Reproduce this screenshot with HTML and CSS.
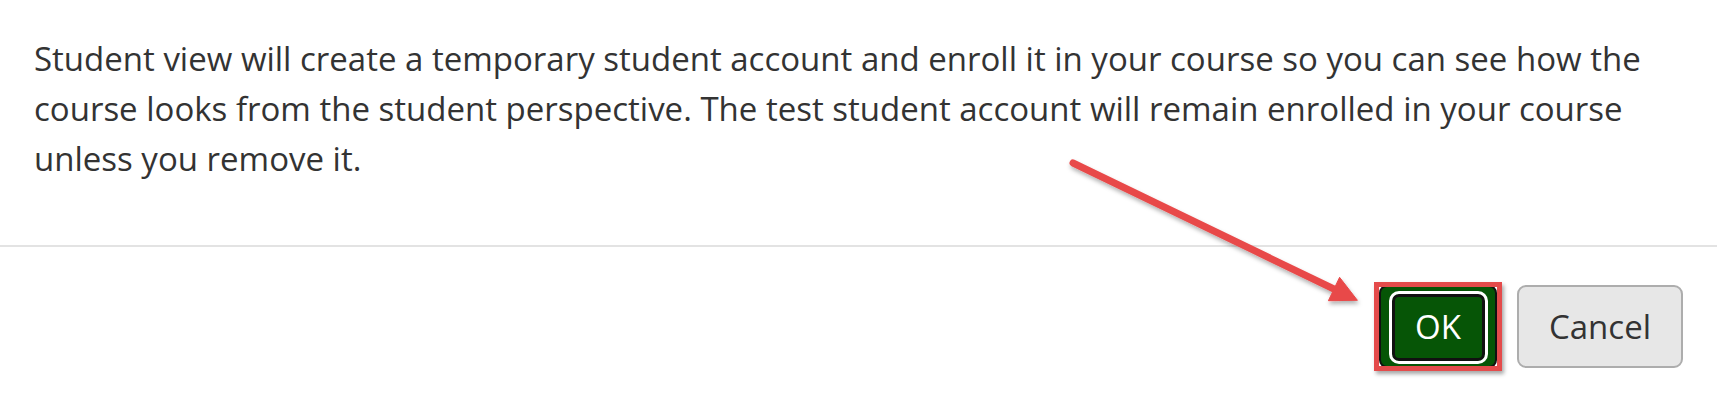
FILE: index.html
```html
<!DOCTYPE html>
<html lang="en">
<head>
<meta charset="utf-8">
<title>Student View</title>
<link rel="stylesheet" href="styles.css">
</head>
<body>
<div class="dialog">
  <div class="dialog-body">
    <p class="message">Student view will create a temporary student account and enroll it in your course so you can see how the course looks from the student perspective. The test student account will remain enrolled in your course unless you remove it.</p>
  </div>
  <div class="dialog-footer">
    <button class="btn btn-ok" type="button">OK<span class="highlight"></span></button>
    <button class="btn btn-cancel" type="button">Cancel</button>
  </div>
  <svg class="annotation" width="1717" height="404" viewBox="0 0 1717 404" aria-hidden="true">
    <defs>
      <filter id="shadow" x="-10%" y="-10%" width="130%" height="140%">
        <feDropShadow dx="1" dy="3" stdDeviation="2" flood-color="#000" flood-opacity="0.3"/>
      </filter>
    </defs>
    <g filter="url(#shadow)" fill="#e84a4a" stroke="#e84a4a">
      <line x1="1073" y1="163" x2="1336" y2="290" stroke-width="7" stroke-linecap="round"/>
      <polygon points="1328.4,300.7 1339.6,277.3 1357.4,300.3" stroke-width="1" stroke-linejoin="round"/>
    </g>
  </svg>
</div>
</body>
</html>
```
FILE: styles.css
```css
html, body {
  margin: 0;
  padding: 0;
  background: #ffffff;
}

body {
  font-family: "Open Sans", "Noto Sans", sans-serif;
  color: #333333;
}

.dialog {
  position: relative;
  width: 1717px;
  height: 404px;
  overflow: hidden;
  background: #ffffff;
}

.dialog-body {
  padding: 34px 33px 61px 34px;
  border-bottom: 2px solid #e3e3e3;
}

.message {
  margin: 0;
  font-size: 33px;
  line-height: 50px;
}

.dialog-footer {
  display: flex;
  justify-content: flex-end;
  align-items: flex-start;
  gap: 20px;
  padding: 38px 34px 0 0;
}

.btn {
  font-family: "Open Sans", "Noto Sans", sans-serif;
  font-size: 33px;
  line-height: 45px;
  height: 83px;
  margin: 0;
  box-sizing: border-box;
  cursor: pointer;
}

.btn-cancel {
  width: 166px;
  background: #e7e7e7;
  color: #333333;
  border: 2px solid #adadad;
  border-radius: 9px;
  padding: 0;
}

.btn-ok {
  position: relative;
  width: 118px;
  background: #065506;
  color: #ffffff;
  border: 2px solid #111111;
  border-radius: 8px;
  padding: 0;
}

.btn-ok::before {
  content: "";
  position: absolute;
  top: 4px;
  bottom: 2px;
  left: 8px;
  right: 7px;
  border: 3px solid #ffffff;
  border-radius: 10px;
  box-shadow: inset 0 0 0 3px #111111;
}

.highlight {
  position: absolute;
  top: -5px;
  bottom: -5px;
  left: -7px;
  right: -7px;
  border: 5px solid #e44b4b;
  box-shadow: 2px 3px 4px rgba(0, 0, 0, 0.35);
  pointer-events: none;
}

.annotation {
  position: absolute;
  top: 0;
  left: 0;
  pointer-events: none;
}
```
